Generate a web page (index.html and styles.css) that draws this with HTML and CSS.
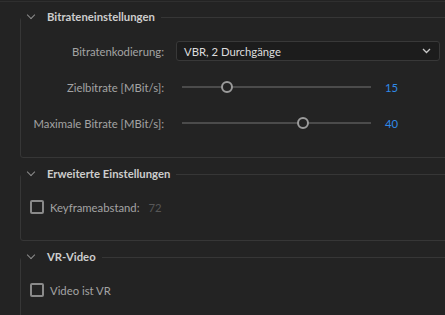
FILE: index.html
```
<!DOCTYPE html>
<html lang="de">
<head>
<meta charset="utf-8">
<title>Export-Einstellungen</title>
<link rel="stylesheet" href="styles.css">
</head>
<body>
<div class="topline"></div>
<div class="panel">

	<fieldset class="group">
		<legend><span class="chev"></span>Bitrateneinstellungen</legend>
		<div class="row">
			<label class="lbl">Bitratenkodierung:</label>
			<div class="select">
				<span>VBR, 2 Durchgänge</span>
				<svg width="9" height="6" viewBox="0 0 9 6"><path d="M1 1l3.5 3.5L8 1" fill="none" stroke="#c8c8c8" stroke-width="1.3"/></svg>
			</div>
		</div>
		<div class="row">
			<label class="lbl">Zielbitrate [MBit/s]:</label>
			<div class="slider"><div class="track"><span class="thumb" style="left: 23.8%"></span></div></div>
			<span class="val">15</span>
		</div>
		<div class="row">
			<label class="lbl">Maximale Bitrate [MBit/s]:</label>
			<div class="slider"><div class="track"><span class="thumb" style="left: 64%"></span></div></div>
			<span class="val">40</span>
		</div>
	</fieldset>

	<fieldset class="group group-checks">
		<legend><span class="chev"></span>Erweiterte Einstellungen</legend>
		<div class="check-row">
			<span class="box"></span>
			<span class="check-lbl">Keyframeabstand:</span>
			<span class="dim">72</span>
		</div>
	</fieldset>

	<fieldset class="group group-checks">
		<legend><span class="chev"></span>VR-Video</legend>
		<div class="check-row">
			<span class="box"></span>
			<span class="check-lbl">Video ist VR</span>
		</div>
	</fieldset>

</div>
</body>
</html>
```
FILE: styles.css
```
body {
	margin: 0;
	background-color: #232323;
	font-family: Lato, "Noto Sans", sans-serif;
	font-size: 11.3px;
	color: #a3a3a3;
	overflow: hidden;
}

.topline {
	height: 1px;
	margin-top: 1px;
	background-color: #2f2f2f;
}

.panel {
	padding: 7px 0 0 20px;
}

.group {
	width: 419px;
	margin: 0 0 8px 0;
	padding: 8px 9px 16px 0;
	border: 1px solid #363636;
	border-radius: 3px;
}

.group-checks {
	padding-top: 14px;
	padding-bottom: 22px;
}

.group legend {
	padding: 0 6px;
	color: #cdcdcd;
	font-weight: bold;
	line-height: 16px;
	display: flex;
	align-items: center;
}

.chev {
	width: 5px;
	height: 5px;
	border-right: 1px solid #8c8c8c;
	border-bottom: 1px solid #8c8c8c;
	transform: rotate(45deg);
	margin: -4px 13px 0 1px;
}

.row {
	display: flex;
	align-items: center;
	height: 36px;
}

.lbl {
	width: 143px;
	text-align: right;
	margin-right: 12px;
}

.select {
	flex: 1;
	height: 18px;
	background-color: #1c1c1c;
	border: 1px solid #383838;
	border-radius: 3px;
	display: flex;
	align-items: center;
	justify-content: space-between;
	padding: 0 8px 0 7px;
	color: #dcdcdc;
}

.slider {
	width: 189px;
	padding: 0 0 0 6px;
}

.track {
	position: relative;
	height: 2px;
	background-color: #4b4b4b;
}

.thumb {
	position: absolute;
	top: -5px;
	width: 8px;
	height: 8px;
	margin-left: -6px;
	border: 2px solid #9b9b9b;
	border-radius: 50%;
	background-color: #232323;
}

.val {
	margin-left: 14px;
	color: #2f8ae8;
}

.check-row {
	display: flex;
	align-items: center;
	height: 22px;
	padding-left: 9px;
}

.box {
	width: 10px;
	height: 10px;
	border: 2px solid #8a8a8a;
	border-radius: 2px;
	margin-right: 6px;
}

.check-lbl {
	margin-right: 9px;
}

.dim {
	color: #575757;
}
```
